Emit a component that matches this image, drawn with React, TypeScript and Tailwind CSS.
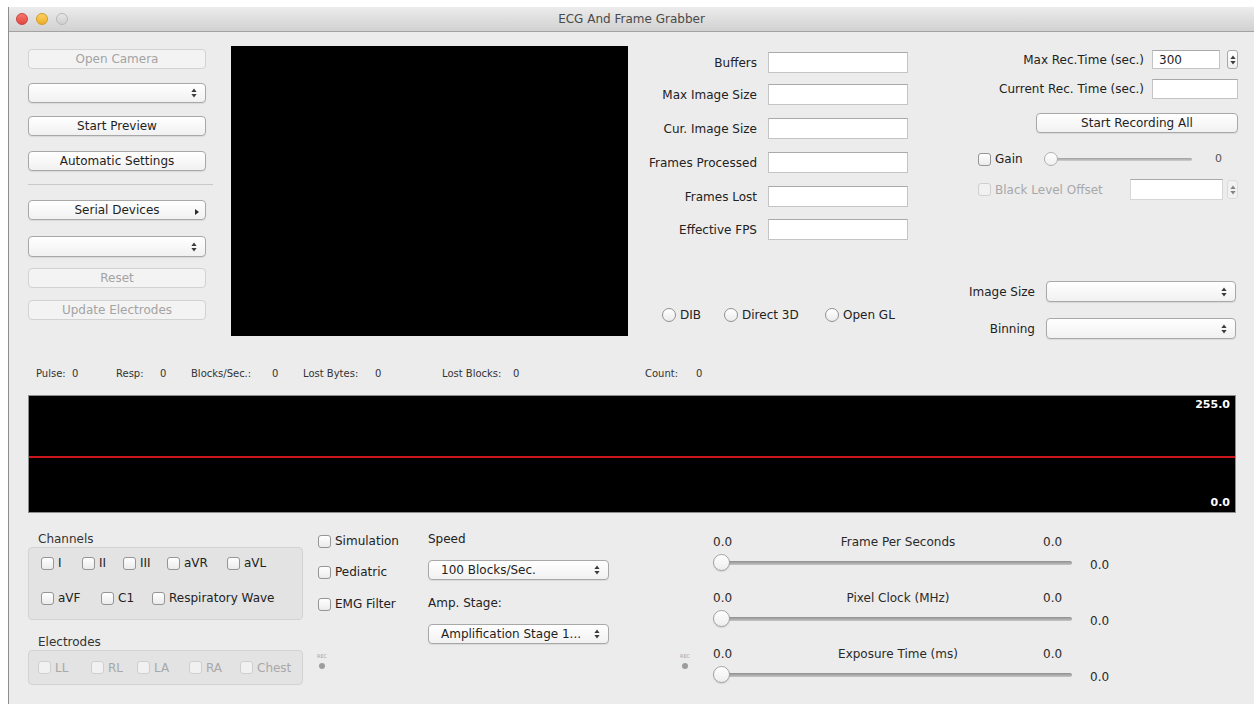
import React from 'react'

// small up/down arrows used by popups and steppers
function UpDown() {
  return (
    <svg width="6" height="10" viewBox="0 0 6 10" className="shrink-0">
      <path d="M3 0.5 L5.6 4 L0.4 4 Z" fill="#3c3c3c" />
      <path d="M3 9.5 L5.6 6 L0.4 6 Z" fill="#3c3c3c" />
    </svg>
  )
}

function Button({ label, disabled, arrow, className = '' }: { label: string; disabled?: boolean; arrow?: boolean; className?: string }) {
  return (
    <div
      className={`relative flex h-[20px] shrink-0 items-center justify-center rounded-[4px] border text-[12px] ${
        disabled
          ? 'border-[#d2d2d2] bg-[#f3f3f3] text-[#a3a3a3]'
          : 'border-[#a8a8a8] bg-linear-to-b from-white to-[#f1f1f1] text-[#1e1e1e] shadow-[0_1px_1px_rgba(0,0,0,0.08)]'
      } ${className}`}
    >
      {label}
      {arrow && (
        <svg width="4" height="6" viewBox="0 0 4 6" className="absolute right-[6px] top-[8px]">
          <path d="M0 0 L4 3 L0 6 Z" fill="#2a2a2a" />
        </svg>
      )}
    </div>
  )
}

function Select({ value = '', className = '' }: { value?: string; className?: string }) {
  return (
    <div
      className={`flex h-[20px] shrink-0 items-center justify-between rounded-[4px] border border-[#a8a8a8] bg-linear-to-b from-white to-[#f1f1f1] pl-[12px] pr-[8px] text-[12px] text-[#1e1e1e] shadow-[0_1px_1px_rgba(0,0,0,0.08)] ${className}`}
    >
      <span>{value}</span>
      <UpDown />
    </div>
  )
}

function Stepper({ disabled }: { disabled?: boolean }) {
  return (
    <div
      className={`flex h-[19px] w-[11px] shrink-0 items-center justify-center rounded-[3px] border ${
        disabled ? 'border-[#d0d0d0] bg-[#f5f5f5] opacity-60' : 'border-[#a8a8a8] bg-linear-to-b from-white to-[#efefef]'
      }`}
    >
      <UpDown />
    </div>
  )
}

function TextBox({ value = '', className = '' }: { value?: string; className?: string }) {
  return (
    <div className={`flex shrink-0 items-center border border-[#c4c4c4] border-t-[#a9a9a9] bg-white pl-[6px] text-[12px] text-[#1e1e1e] ${className}`}>
      {value}
    </div>
  )
}

function Check({ label, disabled, className = '' }: { label: string; disabled?: boolean; className?: string }) {
  return (
    <div className={`flex h-[14px] shrink-0 items-center gap-[4px] text-[12px] ${disabled ? 'text-[#a8a8a8]' : 'text-[#222]'} ${className}`}>
      <span
        className={`h-[13px] w-[13px] shrink-0 rounded-[3px] border ${
          disabled ? 'border-[#cfcfcf] bg-[#f1f1f1]' : 'border-[#959595] bg-linear-to-b from-white to-[#ebebeb]'
        }`}
      />
      <span className="leading-none">{label}</span>
    </div>
  )
}

function Radio({ label, className = '' }: { label: string; className?: string }) {
  return (
    <div className={`flex items-center gap-[4px] text-[12px] ${className}`}>
      <span className="h-[14px] w-[14px] shrink-0 rounded-full border border-[#919191] bg-linear-to-b from-white to-[#ececec]" />
      {label}
    </div>
  )
}

function Rec({ className = '' }: { className?: string }) {
  return (
    <div className={`flex w-[14px] flex-col items-center ${className}`}>
      <span className="text-[5px] leading-[6px] text-[#a5a5a5]">REC</span>
      <span className="mt-[4px] h-[6px] w-[6px] rounded-full bg-[#9c9c9c]" />
    </div>
  )
}

function TitleBar() {
  return (
    <div className="grid h-[25px] shrink-0 grid-cols-[1fr_auto_1fr] items-center border-b border-[#a3a3a3] bg-linear-to-b from-[#ececec] to-[#d1d1d1]">
      <div className="flex gap-[8px] pl-[7px]">
        <span className="h-[12px] w-[12px] rounded-full border border-[#c8443e] bg-linear-to-b from-[#f7766f] to-[#e2453d]" />
        <span className="h-[12px] w-[12px] rounded-full border border-[#d49a22] bg-linear-to-b from-[#fbd362] to-[#eeae20]" />
        <span className="h-[12px] w-[12px] rounded-full border border-[#b8b8b8] bg-linear-to-b from-[#e6e6e6] to-[#cfcfcf]" />
      </div>
      <div className="text-[12px] text-[#4a4a4a]">ECG And Frame Grabber</div>
      <div />
    </div>
  )
}

const counters = [
  { label: 'Buffers', mt: 'mt-[20px]' },
  { label: 'Max Image Size', mt: 'mt-[11px]' },
  { label: 'Cur. Image Size', mt: 'mt-[13px]' },
  { label: 'Frames Processed', mt: 'mt-[13px]' },
  { label: 'Frames Lost', mt: 'mt-[13px]' },
  { label: 'Effective FPS', mt: 'mt-[12px]' },
]

function TopSection() {
  return (
    <div className="flex h-[334px] shrink-0">
      {/* camera / serial controls */}
      <div className="ml-[19px] flex w-[185px] flex-col">
        <Button label="Open Camera" disabled className="mt-[17px] w-[178px]" />
        <Select className="mt-[14px] w-[178px]" />
        <Button label="Start Preview" className="mt-[13px] w-[178px]" />
        <Button label="Automatic Settings" className="mt-[15px] w-[178px]" />
        <div className="mt-[13px] h-px w-[185px] bg-[#c9c9c9]" />
        <Button label="Serial Devices" arrow className="mt-[15px] w-[178px]" />
        <Select className="mt-[16px] h-[21px] w-[178px]" />
        <Button label="Reset" disabled className="mt-[11px] w-[178px]" />
        <Button label="Update Electrodes" disabled className="mt-[12px] w-[178px]" />
      </div>

      {/* preview */}
      <div className="ml-[18px] mt-[14px] h-[290px] w-[397px] shrink-0 bg-black" />

      {/* frame counters */}
      <div className="flex w-[280px] shrink-0 flex-col">
        {counters.map((c) => (
          <div key={c.label} className={`flex h-[21px] items-center ${c.mt}`}>
            <span className="w-[129px] text-right text-[12px]">{c.label}</span>
            <TextBox className="ml-[11px] h-[21px] w-[140px]" />
          </div>
        ))}
        <div className="ml-[34px] mt-[66px] flex items-center">
          <Radio label="DIB" className="w-[62px]" />
          <Radio label="Direct 3D" className="w-[101px]" />
          <Radio label="Open GL" />
        </div>
      </div>

      {/* recording + camera params */}
      <div className="flex w-[330px] shrink-0 flex-col">
        <div className="mt-[18px] flex h-[19px] items-center justify-end">
          <span className="text-[12px]">Max Rec.Time (sec.)</span>
          <TextBox value="300" className="ml-[8px] h-[19px] w-[68px]" />
          <div className="ml-[7px]">
            <Stepper />
          </div>
        </div>
        <div className="mt-[10px] flex h-[20px] items-center justify-end">
          <span className="text-[12px]">Current Rec. Time (sec.)</span>
          <TextBox className="ml-[8px] h-[20px] w-[86px]" />
        </div>
        <Button label="Start Recording All" className="mt-[14px] w-[202px] self-end" />
        <div className="ml-[70px] mt-[19px] flex h-[14px] items-center">
          <Check label="Gain" className="w-[66px]" />
          <div className="relative flex h-[14px] w-[148px] items-center">
            <div className="h-[3px] w-full rounded-full bg-linear-to-b from-[#9f9f9f] to-[#d0d0d0]" />
            <span className="absolute left-0 top-0 h-[14px] w-[14px] rounded-full border border-[#b0b0b0] bg-linear-to-b from-white to-[#efefef]" />
          </div>
          <span className="ml-[23px] text-[11px] text-[#555]">0</span>
        </div>
        <div className="ml-[70px] mt-[13px] flex h-[21px] items-center">
          <Check label="Black Level Offset" disabled className="w-[152px]" />
          <TextBox className="h-[21px] w-[93px] border-[#d6d6d6]" />
          <div className="ml-[4px]">
            <Stepper disabled />
          </div>
        </div>
        <div className="mt-[81px] flex h-[21px] items-center justify-end pr-[2px]">
          <span className="text-[12px]">Image Size</span>
          <Select className="ml-[11px] h-[21px] w-[190px]" />
        </div>
        <div className="mt-[16px] flex h-[21px] items-center justify-end pr-[2px]">
          <span className="text-[12px]">Binning</span>
          <Select className="ml-[11px] h-[21px] w-[190px]" />
        </div>
      </div>
    </div>
  )
}

const stats = [
  { label: 'Pulse:', w: 'w-[80px]', lw: 'w-[36px]' },
  { label: 'Resp:', w: 'w-[75px]', lw: 'w-[44px]' },
  { label: 'Blocks/Sec.:', w: 'w-[112px]', lw: 'w-[81px]' },
  { label: 'Lost Bytes:', w: 'w-[139px]', lw: 'w-[72px]' },
  { label: 'Lost Blocks:', w: 'w-[203px]', lw: 'w-[71px]' },
  { label: 'Count:', w: 'w-[80px]', lw: 'w-[51px]' },
]

function StatusRow() {
  return (
    <div className="flex h-[14px] shrink-0 items-center pl-[27px] text-[10px] text-[#333]">
      {stats.map((s) => (
        <div key={s.label} className={`flex ${s.w}`}>
          <span className={s.lw}>{s.label}</span>
          <span>0</span>
        </div>
      ))}
    </div>
  )
}

function Chart() {
  return (
    <div className="ml-[19px] mt-[15px] flex h-[118px] w-[1208px] shrink-0 flex-col border border-[#8d8d8d] bg-black text-[11px] font-bold text-white">
      <div className="flex h-[19px] items-center justify-end pr-[5px]">255.0</div>
      <div className="h-[41px]" />
      <div className="h-[2px] bg-[#c8161b]" />
      <div className="flex-1" />
      <div className="flex h-[18px] items-center justify-end pr-[5px]">0.0</div>
    </div>
  )
}

function SliderGroup({ title, className = '' }: { title: string; className?: string }) {
  return (
    <div className={`flex flex-col ${className}`}>
      <div className="flex h-[16px] items-center text-[12px] text-[#2a2a2a]">
        <span className="w-[40px]">0.0</span>
        <span className="w-[290px] text-center">{title}</span>
        <span>0.0</span>
      </div>
      <div className="mt-[4px] flex h-[17px] items-center">
        <div className="relative flex h-[17px] w-[359px] items-center">
          <div className="h-[4px] w-full rounded-full bg-linear-to-b from-[#8f8f8f] to-[#c6c6c6]" />
          <span className="absolute left-0 top-0 h-[17px] w-[17px] rounded-full border border-[#a3a3a3] bg-linear-to-b from-white to-[#ededed] shadow-[0_1px_1px_rgba(0,0,0,0.12)]" />
        </div>
        <span className="ml-[18px] pt-[4px] text-[12px] text-[#2a2a2a]">0.0</span>
      </div>
    </div>
  )
}

function BottomSection() {
  return (
    <div className="mt-[18px] flex items-start">
      {/* channel + electrode selection */}
      <div className="ml-[19px] flex w-[275px] flex-col">
        <div className="flex h-[16px] items-center pl-[10px] text-[12px] text-[#333]">Channels</div>
        <div className="flex h-[73px] flex-col rounded-[4px] border border-[#d3d3d3] bg-[#e3e3e3] pl-[12px] pt-[8px]">
          <div className="flex">
            <Check label="I" className="w-[41px]" />
            <Check label="II" className="w-[41px]" />
            <Check label="III" className="w-[44px]" />
            <Check label="aVR" className="w-[60px]" />
            <Check label="aVL" />
          </div>
          <div className="mt-[21px] flex">
            <Check label="aVF" className="w-[60px]" />
            <Check label="C1" className="w-[51px]" />
            <Check label="Respiratory Wave" />
          </div>
        </div>
        <div className="mt-[14px] flex h-[16px] items-center pl-[10px] text-[12px] text-[#333]">Electrodes</div>
        <div className="flex h-[35px] items-center rounded-[4px] border border-[#d3d3d3] bg-[#e3e3e3] pl-[9px]">
          <Check label="LL" disabled className="w-[53px]" />
          <Check label="RL" disabled className="w-[46px]" />
          <Check label="LA" disabled className="w-[52px]" />
          <Check label="RA" disabled className="w-[51px]" />
          <Check label="Chest" disabled />
        </div>
      </div>

      {/* options */}
      <div className="ml-[12px] flex w-[113px] flex-col">
        <Check label="Simulation" className="ml-[3px] mt-[3px]" />
        <Check label="Pediatric" className="ml-[3px] mt-[17px]" />
        <Check label="EMG Filter" className="ml-[3px] mt-[18px]" />
        <Rec className="mt-[42px]" />
      </div>

      {/* acquisition speed */}
      <div className="flex w-[181px] flex-col text-[12px]">
        <div className="flex h-[16px] items-center">Speed</div>
        <Select value="100 Blocks/Sec." className="mt-[13px] w-[181px]" />
        <div className="mt-[15px] flex h-[16px] items-center">Amp. Stage:</div>
        <Select value="Amplification Stage 1..." className="mt-[13px] w-[181px]" />
      </div>

      <Rec className="ml-[69px] mt-[122px]" />

      {/* camera sliders */}
      <div className="ml-[21px] flex flex-col pt-[3px]">
        <SliderGroup title="Frame Per Seconds" />
        <SliderGroup title="Pixel Clock (MHz)" className="mt-[19px]" />
        <SliderGroup title="Exposure Time (ms)" className="mt-[19px]" />
      </div>
    </div>
  )
}

export default function App() {
  return (
    <div className="flex h-[704px] w-[1254px] overflow-hidden bg-white font-['DejaVu_Sans',sans-serif] text-[#222]">
      <div className="w-[8px] shrink-0" />
      <div className="mt-[7px] flex flex-1 flex-col border-l border-[#8e8e8e] bg-[#ececec]">
        <TitleBar />
        <TopSection />
        <StatusRow />
        <Chart />
        <BottomSection />
      </div>
    </div>
  )
}
